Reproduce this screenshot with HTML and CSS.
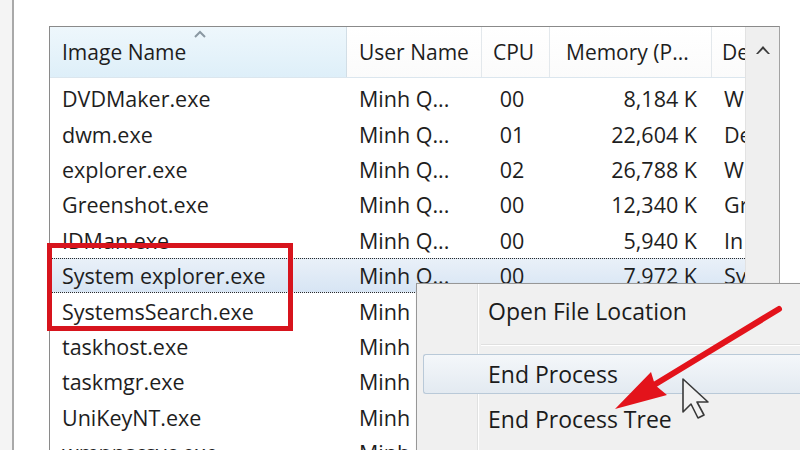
FILE: index.html
```html
<!DOCTYPE html>
<html>
<head>
<meta charset="utf-8">
<link rel="stylesheet" href="styles.css">
</head>
<body>
<div class="screen">
  <div class="strip"></div>
  <div class="main">
    <div class="listbox">
      <div class="list">
        <div class="hdr">
          <div class="hc c-name sorted">Image Name
            <svg class="sort" width="12" height="8" viewBox="0 0 12 8"><polyline points="1,7 6,2 11,7" fill="none" stroke="#8a98a2" stroke-width="2"/></svg>
          </div>
          <div class="hc c-user">User Name</div>
          <div class="hc c-cpu">CPU</div>
          <div class="hc c-mem">Memory (P...</div>
          <div class="hc c-de">De</div>
        </div>
        <div class="rows">
          <div class="row"><span class="c-name">DVDMaker.exe</span><span class="c-user">Minh Q...</span><span class="c-cpu">00</span><span class="c-mem">8,184 K</span><span class="c-de">W</span></div>
          <div class="row"><span class="c-name">dwm.exe</span><span class="c-user">Minh Q...</span><span class="c-cpu">01</span><span class="c-mem">22,604 K</span><span class="c-de">De</span></div>
          <div class="row"><span class="c-name">explorer.exe</span><span class="c-user">Minh Q...</span><span class="c-cpu">02</span><span class="c-mem">26,788 K</span><span class="c-de">W</span></div>
          <div class="row"><span class="c-name">Greenshot.exe</span><span class="c-user">Minh Q...</span><span class="c-cpu">00</span><span class="c-mem">12,340 K</span><span class="c-de">Gr</span></div>
          <div class="row"><span class="c-name">IDMan.exe</span><span class="c-user">Minh Q...</span><span class="c-cpu">00</span><span class="c-mem">5,940 K</span><span class="c-de">In</span></div>
          <div class="row selected"><span class="c-name">System explorer.exe</span><span class="c-user">Minh Q...</span><span class="c-cpu">00</span><span class="c-mem">7,972 K</span><span class="c-de">Sy</span></div>
          <div class="row"><span class="c-name">SystemsSearch.exe</span><span class="c-user">Minh Q...</span><span class="c-cpu">00</span><span class="c-mem">2,104 K</span><span class="c-de">Sy</span></div>
          <div class="row"><span class="c-name">taskhost.exe</span><span class="c-user">Minh Q...</span><span class="c-cpu">00</span><span class="c-mem">3,012 K</span><span class="c-de">Ho</span></div>
          <div class="row"><span class="c-name">taskmgr.exe</span><span class="c-user">Minh Q...</span><span class="c-cpu">01</span><span class="c-mem">4,528 K</span><span class="c-de">Wi</span></div>
          <div class="row"><span class="c-name">UniKeyNT.exe</span><span class="c-user">Minh Q...</span><span class="c-cpu">00</span><span class="c-mem">1,936 K</span><span class="c-de">Un</span></div>
          <div class="row"><span class="c-name">wmpnscsvc.exe</span><span class="c-user">Minh Q...</span><span class="c-cpu">00</span><span class="c-mem">1,204 K</span><span class="c-de">Wi</span></div>
        </div>
      </div>
      <div class="scroll">
        <svg class="up" width="14" height="10" viewBox="0 0 14 10"><polygon points="0,9 7,1 14,9 12,9 7,4 2,9" fill="#3a3a3a"/></svg>
      </div>
    </div>
  </div>

  <div class="redbox"></div>

  <div class="menu">
    <div class="mi">Open File Location</div>
    <div class="sep"></div>
    <div class="mi hi">End Process</div>
    <div class="mi">End Process Tree</div>
  </div>

  <svg class="overlay" width="800" height="450" viewBox="0 0 800 450">
    <line x1="779" y1="309" x2="654" y2="385" stroke="#e3131b" stroke-width="6" stroke-linecap="round"/>
    <polygon points="615,409 651,372 655,385 667,395" fill="#e3131b"/>
    <path d="M683,379 L683,412 L691,404 L698,418 L704,415 L697,402 L708,402 Z" fill="#f2f2f2" stroke="#3a3a3a" stroke-width="1.6" stroke-linejoin="round"/>
  </svg>
</div>
</body>
</html>
```

FILE: styles.css
```css
html, body {
  margin: 0;
  padding: 0;
}

.screen {
  width: 800px;
  height: 450px;
  position: relative;
  overflow: hidden;
  background: #ffffff;
  display: flex;
  font-family: "Open Sans", "Noto Sans", sans-serif;
  color: #1e1e1e;
}

.strip {
  width: 12px;
  flex: none;
  background: #f4f4f4;
  border-right: 2px solid #a9a9a9;
}

.main {
  flex: 1;
  padding: 26px 0 0 35px;
}

.listbox {
  width: 729px;
  height: 430px;
  border: 1px solid #8a8a8a;
  border-bottom: none;
  border-right-color: #a3a3a3;
  display: flex;
}

.list {
  width: 695px;
  flex: none;
  overflow: hidden;
}

.scroll {
  flex: 1;
  background: #efefef;
  border-left: 1px solid #e2e2e2;
  display: flex;
  justify-content: center;
  padding-top: 18px;
  box-sizing: border-box;
}

.up {
  display: block;
}

.hdr {
  display: grid;
  grid-template-columns: 297px 135px 68px 162px 33px;
  height: 50px;
  border-bottom: 1px solid #dbe6ee;
  background: linear-gradient(#ffffff, #fbfbfb);
}

.hc {
  position: relative;
  display: flex;
  align-items: center;
  font-size: 21px;
  white-space: nowrap;
  overflow: hidden;
  border-right: 1px solid #e3e8ec;
  box-sizing: border-box;
}

.hc.sorted {
  background: linear-gradient(#eef7fc, #deeff9);
  border-right-color: #d2dee6;
}

.sort {
  position: absolute;
  left: 144px;
  top: 3px;
}

.hc.c-name { padding-left: 12px; }
.hc.c-user { padding-left: 12px; }
.hc.c-cpu { padding-left: 11px; }
.hc.c-mem { padding-left: 16px; }
.hc.c-de { padding-left: 10px; border-right: none; }

.rows {
  padding-top: 3px;
}

.row {
  display: grid;
  grid-template-columns: 297px 135px 68px 162px 33px;
  height: 35.4px;
  align-items: center;
  font-size: 21.5px;
  white-space: nowrap;
  box-sizing: border-box;
}

.row > span {
  overflow: hidden;
}

.row.selected {
  background: linear-gradient(#e9f0f8, #d7e5f4);
  border-top: 1px dotted #2a2a2a;
  border-bottom: 1px dotted #2a2a2a;
}

.row .c-name { padding-left: 12px; }
.row .c-user { padding-left: 12px; }
.row .c-cpu { text-align: center; padding-right: 8px; }
.row .c-mem { text-align: right; padding-right: 15px; }
.row .c-de { padding-left: 12px; }

.redbox {
  position: absolute;
  left: 47px;
  top: 243px;
  width: 236px;
  height: 78px;
  border: 5px solid #d7141d;
}

.menu {
  position: absolute;
  left: 416px;
  top: 283px;
  width: 420px;
  height: 200px;
  background-color: #f0f0f0;
  background-image: linear-gradient(to right, transparent 60px, #e0e1e1 60px, #e0e1e1 61px, #ffffff 61px, #ffffff 62px, transparent 62px);
  border: 1px solid #979797;
  box-shadow: 2px 2px 3px rgba(0,0,0,0.25);
  display: flex;
  flex-direction: column;
  font-size: 23px;
  color: #1b1b1b;
}

.mi {
  height: 42px;
  display: flex;
  align-items: center;
  padding-left: 71px;
  white-space: nowrap;
}

.mi:first-child {
  margin-top: 6px;
}

.sep {
  height: 1px;
  margin: 12px 0 8px 64px;
  background: #e0e0e0;
  border-bottom: 1px solid #ffffff;
}

.mi.hi {
  margin-left: 6px;
  padding-left: 64px;
  height: 40px;
  border: 1px solid #b9c9d8;
  border-right: none;
  border-radius: 3px 0 0 3px;
  background: linear-gradient(#f4f7fa, #e3eaf1);
  box-sizing: border-box;
}

.mi.hi + .mi {
  margin-top: 4px;
}

.overlay {
  position: absolute;
  left: 0;
  top: 0;
  pointer-events: none;
}
```
